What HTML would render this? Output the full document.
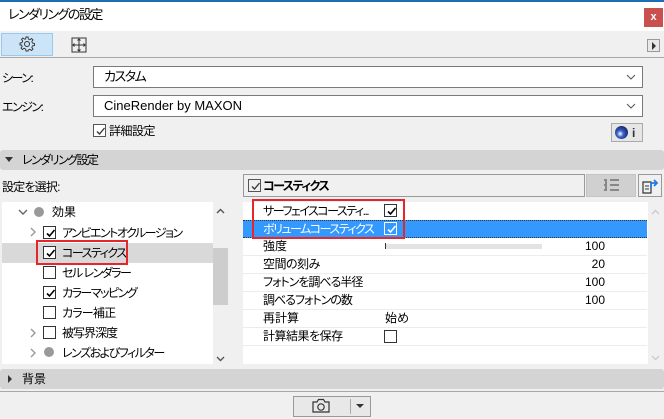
<!DOCTYPE html>
<html><head><meta charset="utf-8"><style>
*{margin:0;padding:0;box-sizing:border-box}
body{width:664px;height:419px;background:#f0f0f0;font-family:"Liberation Sans","Noto Sans CJK JP",sans-serif;font-size:12px;color:#000;position:relative;overflow:hidden;font-feature-settings:"palt" 1}
.a{position:absolute}
.t{position:absolute;white-space:nowrap;line-height:14px;letter-spacing:-1.5px}
.cb{position:absolute;width:13px;height:13px;border:1px solid #333;background:#fff}
.cb svg{position:absolute;left:1px;top:1px}
.dd{position:absolute;left:93px;width:550px;height:22px;border:1px solid #7a7a7a;background:#fff}
.row{position:absolute;left:243px;width:404px;height:18px;border-bottom:1px solid #ececec}
.val{position:absolute;right:42px;top:2px;letter-spacing:0}
</style></head><body>
<div class="a" style="left:0;top:0;width:664px;height:2px;background:#1d6db5"></div>
<div class="a" style="left:0;top:2px;width:664px;height:29px;background:#fff"></div>
<div class="t" style="left:8px;top:8px;font-size:13px">レンダリングの設定</div>
<div class="a" style="left:644px;top:8px;width:19px;height:19px;background:#c9504f;color:#fff;font-size:11px;font-weight:bold;text-align:center;line-height:18px">x</div>
<div class="a" style="left:1px;top:33px;width:52px;height:23px;background:#cce4f7;border:1px solid #99c9ef"></div>
<svg class="a" style="left:19px;top:36px" width="16" height="16" viewBox="0 0 16 16"><circle cx="8" cy="8" r="2.5" fill="none" stroke="#333"/><path d="M7 1h2l.4 2 1.5.7 1.7-1.2 1.4 1.4-1.2 1.7.7 1.5 2 .4v2l-2 .4-.7 1.5 1.2 1.7-1.4 1.4-1.7-1.2-1.5.7L9 15H7l-.4-2-1.5-.7-1.7 1.2-1.4-1.4 1.2-1.7L2.5 9 1 9V7l2-.4.7-1.5-1.2-1.7 1.4-1.4 1.7 1.2L6.6 3z" fill="none" stroke="#333" stroke-width=".9"/></svg>
<svg class="a" style="left:71px;top:37px" width="16" height="16" viewBox="0 0 16 16"><rect x="1" y="1" width="14" height="14" fill="none" stroke="#333"/><path d="M8 2v12M2 8h12M6.5 3.5L8 2l1.5 1.5M6.5 12.5L8 14l1.5-1.5M3.5 6.5L2 8l1.5 1.5M12.5 6.5L14 8l-1.5 1.5" fill="none" stroke="#333"/></svg>
<div class="a" style="left:647px;top:39px;width:13px;height:13px;border:1px solid #999;background:#e8e8e8"></div>
<div class="a" style="left:652px;top:42px;border-left:4px solid #333;border-top:4px solid transparent;border-bottom:4px solid transparent"></div>
<div class="a" style="left:0;top:57px;width:664px;height:1px;background:#a8a8a8"></div>
<div class="t" style="left:2px;top:71px">シーン:</div>
<div class="dd" style="top:66px"><div class="t" style="left:10px;top:3px;font-size:13px">カスタム</div><svg class="a" style="right:6px;top:7px" width="10" height="6"><path d="M1 1l4 4 4-4" fill="none" stroke="#555"/></svg></div>
<div class="t" style="left:2px;top:100px">エンジン:</div>
<div class="dd" style="top:95px"><div class="t" style="left:10px;top:3px;font-size:13px;letter-spacing:0">CineRender by MAXON</div><svg class="a" style="right:6px;top:7px" width="10" height="6"><path d="M1 1l4 4 4-4" fill="none" stroke="#555"/></svg></div>
<div class="cb" style="left:93px;top:124px;border-color:#555"><svg width="11" height="11"><path d="M2 5.5l2.5 2.5 5-6" fill="none" stroke="#333" stroke-width="1.3"/></svg></div>
<div class="t" style="left:109px;top:124px;letter-spacing:-0.5px">詳細設定</div>
<div class="a" style="left:611px;top:123px;width:32px;height:19px;border:1px solid #aaa;background:#e6e6e6"></div>
<div class="a" style="left:615px;top:126px;width:13px;height:13px;border-radius:50%;background:radial-gradient(circle at 40% 60%,#fff 0,#3a5fc8 30%,#0b1f5a 80%)"></div>
<div class="t" style="left:632px;top:126px;font-weight:bold;color:#333">i</div>
<div class="a" style="left:0;top:150px;width:664px;height:20px;background:#d4d4d4;border-radius:3px"></div>
<div class="a" style="left:5px;top:157px;border-top:5px solid #333;border-left:4px solid transparent;border-right:4px solid transparent"></div>
<div class="t" style="left:22px;top:153px">レンダリング設定</div>
<div class="t" style="left:2px;top:180px;letter-spacing:-0.8px">設定を選択:</div>
<div class="a" style="left:243px;top:174px;width:342px;height:23px;border:1px solid #999;background:#f0f0f0"></div>
<div class="cb" style="left:248px;top:179px;border-color:#555;background:#f0f0f0"><svg width="11" height="11"><path d="M2 5.5l2.5 2.5 5-6" fill="none" stroke="#333" stroke-width="1.3"/></svg></div>
<div class="t" style="left:263px;top:179px;font-weight:bold">コースティクス</div>
<div class="a" style="left:586px;top:174px;width:50px;height:23px;background:#d0d0d0;border:1px solid #c4c4c4"></div>
<svg class="a" style="left:603px;top:179px" width="17" height="13"><path d="M1 1h3M1 6h3M1 11h3M3 1v10M7 1h9M7 6h9M7 11h9" stroke="#888" stroke-width="2"/></svg>
<div class="a" style="left:638px;top:174px;width:24px;height:23px;border:1px solid #999;background:#f0f0f0"></div>
<svg class="a" style="left:641px;top:177px" width="18" height="18"><path d="M2 5h8v11H2z" fill="none" stroke="#333" stroke-width="1.2"/><path d="M4 9h4M4 12h4" stroke="#333"/><path d="M10 11V6h5M13 3l3 3-3 3" fill="none" stroke="#1e7be0" stroke-width="1.8"/></svg>
<div class="a" style="left:2px;top:202px;width:211px;height:162px;background:#fff"></div>
<div class="a" style="left:213px;top:202px;width:16px;height:162px;background:#f0f0f0"></div>
<div class="a" style="left:213px;top:248px;width:15px;height:57px;background:#cdcdcd"></div>
<svg class="a" style="left:216px;top:208px" width="9" height="6"><path d="M1 5l3.5-3.5L8 5" fill="none" stroke="#555" stroke-width="1.4"/></svg>
<svg class="a" style="left:216px;top:356px" width="9" height="6"><path d="M1 1l3.5 3.5L8 1" fill="none" stroke="#555" stroke-width="1.4"/></svg>
<div class="a" style="left:2px;top:243px;width:211px;height:20px;background:#d9d9d9"></div>
<svg class="a" style="left:18px;top:209px" width="10" height="6"><path d="M1 1l4 4 4-4" fill="none" stroke="#666" stroke-width="1.4"/></svg>
<div class="a" style="left:34px;top:207px;width:10px;height:10px;border-radius:50%;background:#999"></div>
<div class="t" style="left:52px;top:205px;letter-spacing:0">効果</div>
<svg class="a" style="left:30px;top:227px" width="6" height="10"><path d="M1 1l4 4-4 4" fill="none" stroke="#999" stroke-width="1.4"/></svg>
<div class="cb" style="left:43px;top:226px"><svg width="11" height="11"><path d="M2 5.5l2.5 2.5 5-6" fill="none" stroke="#000" stroke-width="1.6"/></svg></div>
<div class="t" style="left:62px;top:226px">アンビエントオクルージョン</div>
<div class="cb" style="left:43px;top:246px"><svg width="11" height="11"><path d="M2 5.5l2.5 2.5 5-6" fill="none" stroke="#000" stroke-width="1.6"/></svg></div>
<div class="t" style="left:62px;top:246px">コースティクス</div>
<div class="a" style="left:36px;top:240px;width:92px;height:25px;border:2px solid #e5262a"></div>
<div class="cb" style="left:43px;top:266px"></div>
<div class="t" style="left:62px;top:266px">セル レンダラー</div>
<div class="cb" style="left:43px;top:286px"><svg width="11" height="11"><path d="M2 5.5l2.5 2.5 5-6" fill="none" stroke="#000" stroke-width="1.6"/></svg></div>
<div class="t" style="left:62px;top:286px">カラーマッピング</div>
<div class="cb" style="left:43px;top:306px"></div>
<div class="t" style="left:62px;top:306px;letter-spacing:-0.8px">カラー補正</div>
<svg class="a" style="left:30px;top:328px" width="6" height="10"><path d="M1 1l4 4-4 4" fill="none" stroke="#999" stroke-width="1.4"/></svg>
<div class="cb" style="left:43px;top:326px"></div>
<div class="t" style="left:62px;top:326px;letter-spacing:-1px">被写界深度</div>
<svg class="a" style="left:30px;top:348px" width="6" height="10"><path d="M1 1l4 4-4 4" fill="none" stroke="#999" stroke-width="1.4"/></svg>
<div class="a" style="left:44px;top:347px;width:10px;height:10px;border-radius:50%;background:#999"></div>
<div class="t" style="left:62px;top:346px">レンズおよびフィルター</div>
<div class="a" style="left:243px;top:202px;width:405px;height:162px;background:#fff"></div>
<svg class="a" style="left:651px;top:209px" width="9" height="6"><path d="M1 5l3.5-3.5L8 5" fill="none" stroke="#ccc" stroke-width="1.4"/></svg>
<svg class="a" style="left:651px;top:355px" width="9" height="6"><path d="M1 1l3.5 3.5L8 1" fill="none" stroke="#ccc" stroke-width="1.4"/></svg>
<div class="row" style="top:202px;border:0"><div class="t" style="left:20px;top:2px">サーフェイスコースティ...</div><div class="cb" style="left:141px;top:2px"><svg width="11" height="11"><path d="M2 5.5l2.5 2.5 5-6" fill="none" stroke="#000" stroke-width="1.6"/></svg></div></div>
<div class="row" style="top:220px;height:18px;background:#3399ff;border:1px dotted #333;border-left:0;border-right:0"><div class="t" style="left:20px;top:1px;color:#fff">ボリュームコースティクス</div><div class="cb" style="left:141px;top:1px;border-color:#fff;background:#3399ff"><svg width="11" height="11"><path d="M2 5.5l2.5 2.5 5-6" fill="none" stroke="#fff" stroke-width="1.6"/></svg></div></div>
<div class="a" style="left:252px;top:199px;width:153px;height:40px;border:2px solid #e5262a"></div>
<div class="row" style="top:238px"><div class="t" style="left:20px;top:1px;letter-spacing:0">強度</div><div class="a" style="left:142px;top:6px;width:157px;height:5px;background:#e3e3e3"></div><div class="a" style="left:142px;top:5px;width:1px;height:6px;background:#333"></div><div class="val" style="top:1px">100</div></div>
<div class="row" style="top:256px"><div class="t" style="left:20px;top:1px;letter-spacing:-0.5px">空間の刻み</div><div class="val" style="top:1px">20</div></div>
<div class="row" style="top:274px"><div class="t" style="left:20px;top:1px;letter-spacing:-1px">フォトンを調べる半径</div><div class="val" style="top:1px">100</div></div>
<div class="row" style="top:292px"><div class="t" style="left:20px;top:1px;letter-spacing:-1px">調べるフォトンの数</div><div class="val" style="top:1px">100</div></div>
<div class="row" style="top:310px"><div class="t" style="left:20px;top:1px;letter-spacing:0">再計算</div><div class="t" style="left:142px;top:1px;letter-spacing:0">始め</div></div>
<div class="row" style="top:328px"><div class="t" style="left:20px;top:1px;letter-spacing:-0.5px">計算結果を保存</div><div class="cb" style="left:141px;top:2px"></div></div>
<div class="a" style="left:0;top:369px;width:664px;height:20px;background:#d4d4d4;border-radius:3px"></div>
<div class="a" style="left:8px;top:375px;border-left:4px solid #333;border-top:4px solid transparent;border-bottom:4px solid transparent"></div>
<div class="t" style="left:22px;top:372px;letter-spacing:0">背景</div>
<div class="a" style="left:0;top:391px;width:664px;height:1px;background:#a8a8a8"></div>
<div class="a" style="left:293px;top:396px;width:78px;height:21px;border:1px solid #999;background:#e8e8e8"></div>
<div class="a" style="left:350px;top:399px;width:1px;height:15px;background:#aaa"></div>
<svg class="a" style="left:312px;top:398px" width="18" height="16"><path d="M1 4h4l1.5-2.5h5L13 4h4v10H1z" fill="none" stroke="#333" stroke-width="1.2"/><circle cx="9" cy="9" r="3.2" fill="none" stroke="#333" stroke-width="1.2"/></svg>
<div class="a" style="left:356px;top:404px;border-top:4px solid #333;border-left:4px solid transparent;border-right:4px solid transparent"></div>
</body></html>
